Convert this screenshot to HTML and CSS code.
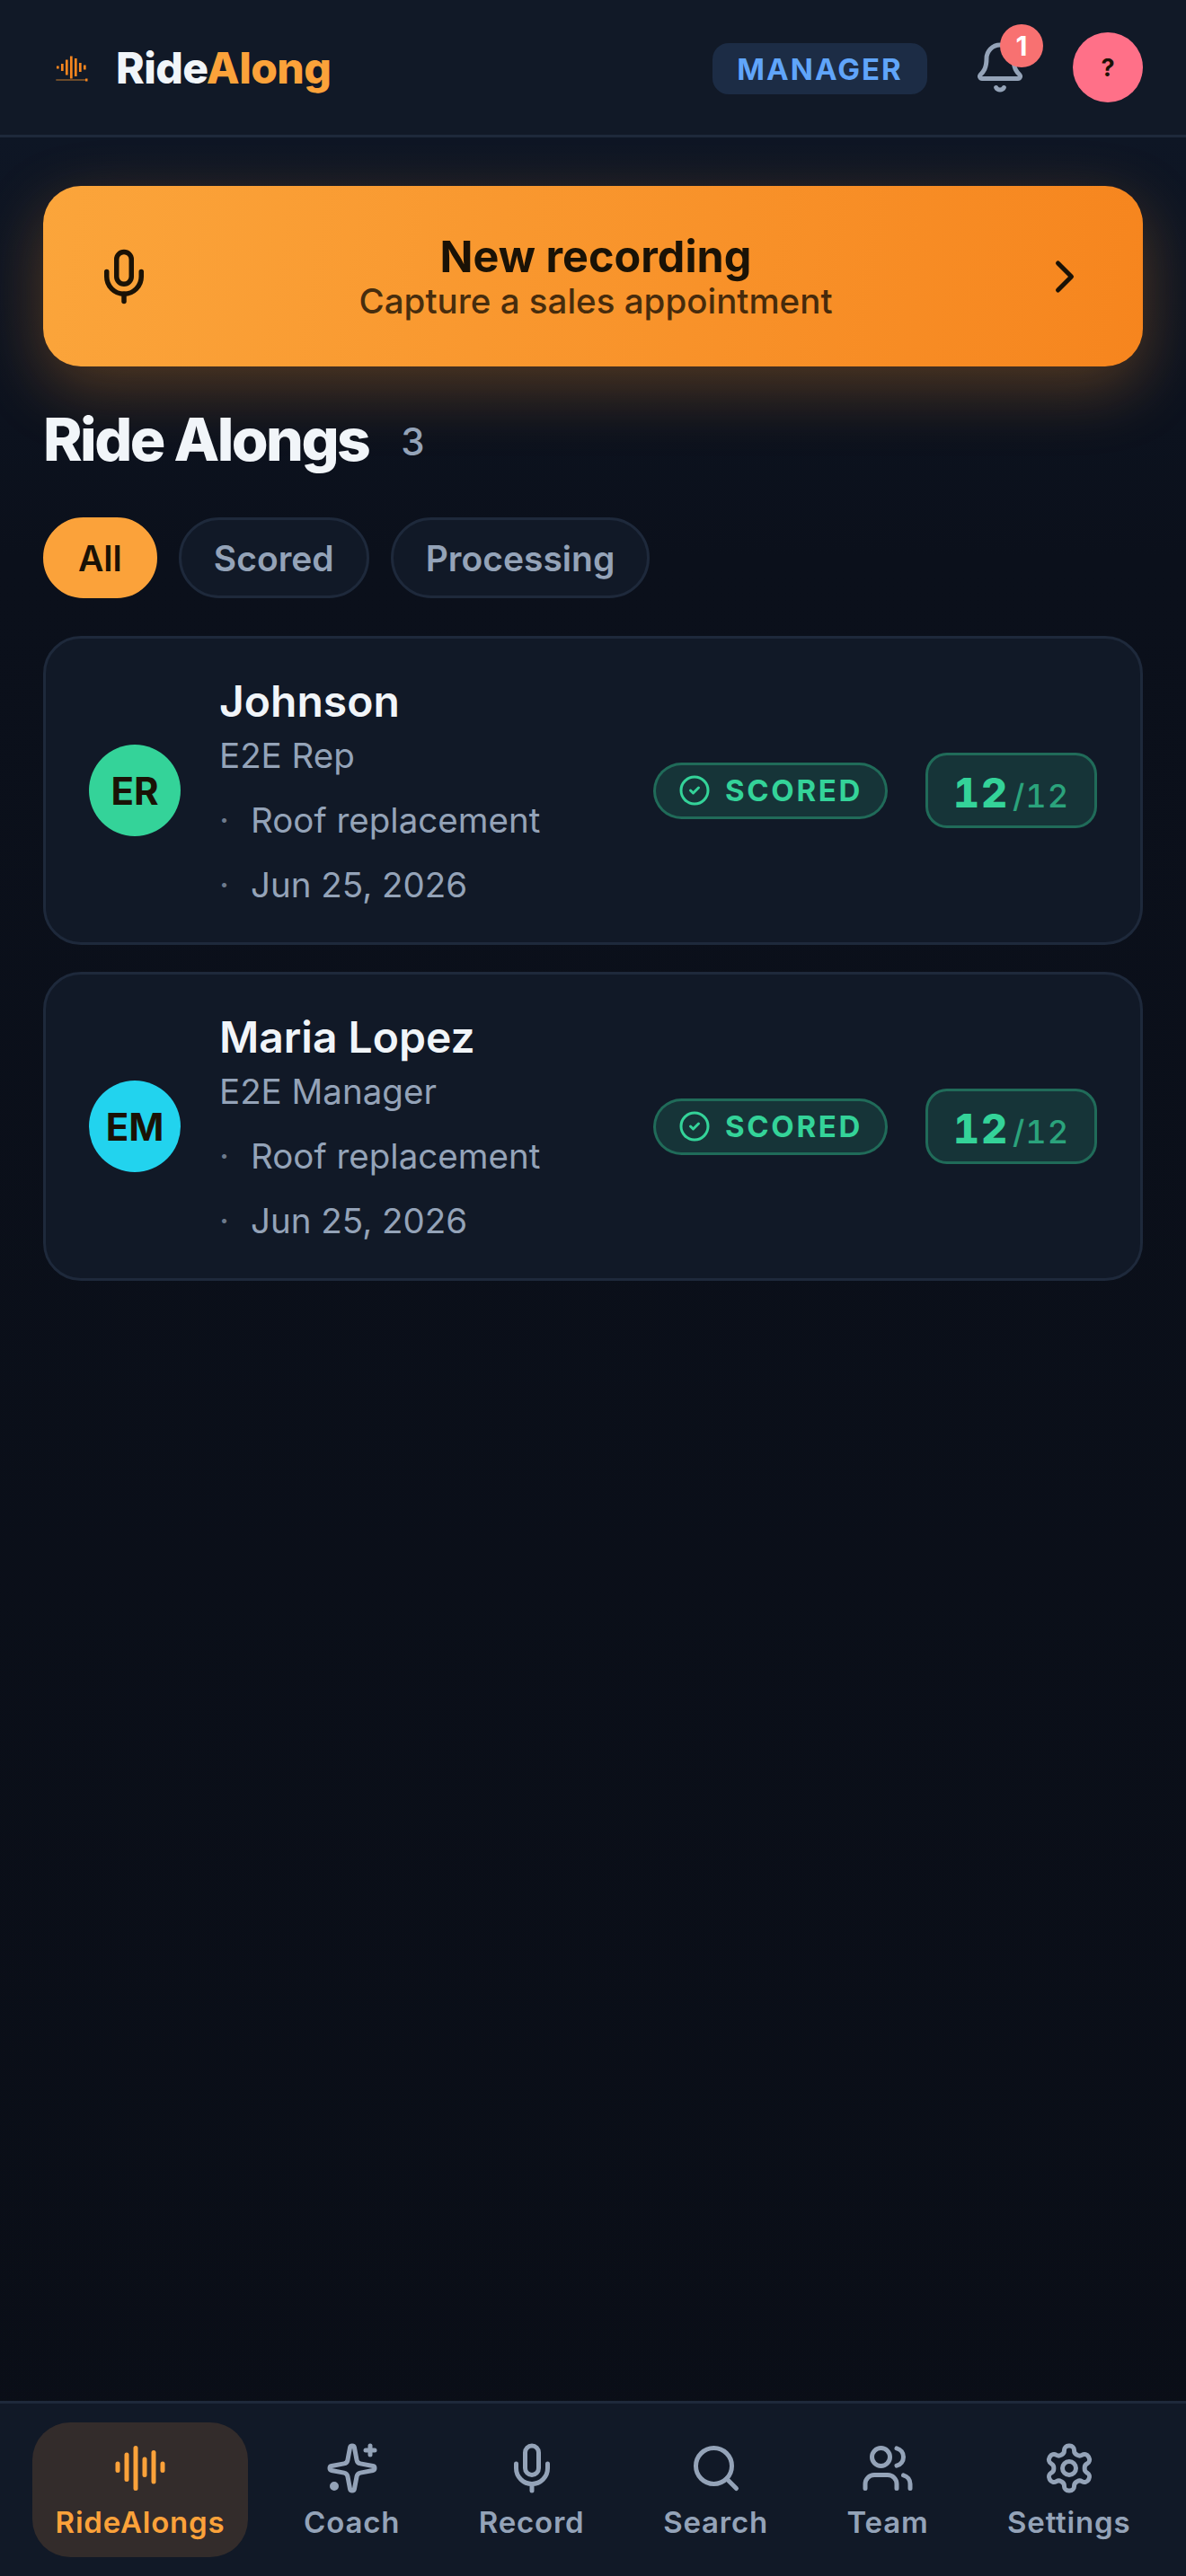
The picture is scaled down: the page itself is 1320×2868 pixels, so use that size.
FILE: index.html
```html
<!DOCTYPE html>
<html lang="en">
<head>
    <meta charset="UTF-8">
    <meta name="viewport" content="width=device-width, initial-scale=1.0">
    <title>RideAlong</title>
    <link rel="stylesheet" href="styles.css">
</head>
<body>
    <header class="topbar">
        <div class="brand">
            <svg class="brand-mark" viewBox="0 0 60 60">
                <path class="brand-wave" d="M16.3 28.4v3.2M21.3 26v8M26.3 21.5v17M31.3 17.5v25M36.3 20v20M41.3 25v10M46.3 27.5v5"/>
                <path class="brand-line" d="M14.3 44H47"/>
                <path class="brand-tip" d="M47 44h2.5"/>
            </svg>
            <span class="brand-name">Ride<span class="brand-accent">Along</span></span>
        </div>
        <div class="topbar-right">
            <span class="role-pill">MANAGER</span>
            <div class="bell">
                <svg class="icon-bell" viewBox="0 0 24 24"><path d="M10.268 21a2 2 0 0 0 3.464 0"/><path d="M3.262 15.326A1 1 0 0 0 4 17h16a1 1 0 0 0 .74-1.673C19.41 13.956 18 12.499 18 8A6 6 0 0 0 6 8c0 4.499-1.411 5.956-2.738 7.326"/></svg>
                <span class="bell-count">1</span>
            </div>
            <div class="user-avatar">?</div>
        </div>
    </header>

    <main class="content">
        <a class="record-banner">
            <svg class="icon-mic" viewBox="0 0 24 24"><path d="M12 19v3"/><path d="M19 10v2a7 7 0 0 1-14 0v-2"/><rect x="9" y="2" width="6" height="13" rx="3"/></svg>
            <div class="record-text">
                <div class="record-title">New recording</div>
                <div class="record-sub">Capture a sales appointment</div>
            </div>
            <svg class="icon-chevron" viewBox="0 0 24 24"><path d="m9 18 6-6-6-6"/></svg>
        </a>

        <div class="section-head">
            <h1>Ride Alongs</h1>
            <span class="section-count">3</span>
        </div>

        <div class="filters">
            <button class="filter active">All</button>
            <button class="filter">Scored</button>
            <button class="filter">Processing</button>
        </div>

        <div class="card">
            <div class="avatar avatar-green">ER</div>
            <div class="card-info">
                <div class="card-name">Johnson</div>
                <div class="card-role">E2E Rep</div>
                <div class="card-meta"><span class="dot">·</span>Roof replacement</div>
                <div class="card-meta"><span class="dot">·</span>Jun 25, 2026</div>
            </div>
            <div class="status-pill">
                <svg class="icon-check" viewBox="0 0 24 24"><circle cx="12" cy="12" r="10"/><path d="m9 12 2 2 4-4"/></svg>
                SCORED
            </div>
            <div class="score"><span class="score-num">12</span><span class="score-max">/12</span></div>
        </div>

        <div class="card">
            <div class="avatar avatar-cyan">EM</div>
            <div class="card-info">
                <div class="card-name">Maria Lopez</div>
                <div class="card-role">E2E Manager</div>
                <div class="card-meta"><span class="dot">·</span>Roof replacement</div>
                <div class="card-meta"><span class="dot">·</span>Jun 25, 2026</div>
            </div>
            <div class="status-pill">
                <svg class="icon-check" viewBox="0 0 24 24"><circle cx="12" cy="12" r="10"/><path d="m9 12 2 2 4-4"/></svg>
                SCORED
            </div>
            <div class="score"><span class="score-num">12</span><span class="score-max">/12</span></div>
        </div>
    </main>

    <nav class="bottom-nav">
        <a class="nav-item active">
            <svg viewBox="0 0 24 24"><path d="M2 10v3"/><path d="M6 6v11"/><path d="M10 3v18"/><path d="M14 8v7"/><path d="M18 5v13"/><path d="M22 10v3"/></svg>
            <span>RideAlongs</span>
        </a>
        <a class="nav-item">
            <svg viewBox="0 0 24 24"><path d="M11.017 2.814a1 1 0 0 1 1.966 0l1.051 5.558a2 2 0 0 0 1.594 1.594l5.558 1.051a1 1 0 0 1 0 1.966l-5.558 1.051a2 2 0 0 0-1.594 1.594l-1.051 5.558a1 1 0 0 1-1.966 0l-1.051-5.558a2 2 0 0 0-1.594-1.594l-5.558-1.051a1 1 0 0 1 0-1.966l5.558-1.051a2 2 0 0 0 1.594-1.594z"/><path d="M20 2v4"/><path d="M22 4h-4"/><circle cx="4" cy="20" r="1"/></svg>
            <span>Coach</span>
        </a>
        <a class="nav-item">
            <svg viewBox="0 0 24 24"><path d="M12 19v3"/><path d="M19 10v2a7 7 0 0 1-14 0v-2"/><rect x="9" y="2" width="6" height="13" rx="3"/></svg>
            <span>Record</span>
        </a>
        <a class="nav-item">
            <svg viewBox="0 0 24 24"><circle cx="11" cy="11" r="8"/><path d="m21 21-4.3-4.3"/></svg>
            <span>Search</span>
        </a>
        <a class="nav-item">
            <svg viewBox="0 0 24 24"><path d="M16 21v-2a4 4 0 0 0-4-4H6a4 4 0 0 0-4 4v2"/><circle cx="9" cy="7" r="4"/><path d="M16 3.128a4 4 0 0 1 0 7.744"/><path d="M22 21v-2a4 4 0 0 0-3-3.87"/></svg>
            <span>Team</span>
        </a>
        <a class="nav-item">
            <svg viewBox="0 0 24 24"><path d="M12.22 2h-.44a2 2 0 0 0-2 2v.18a2 2 0 0 1-1 1.73l-.43.25a2 2 0 0 1-2 0l-.15-.08a2 2 0 0 0-2.73.73l-.22.38a2 2 0 0 0 .73 2.73l.15.1a2 2 0 0 1 1 1.72v.51a2 2 0 0 1-1 1.74l-.15.09a2 2 0 0 0-.73 2.73l.22.38a2 2 0 0 0 2.73.73l.15-.08a2 2 0 0 1 2 0l.43.25a2 2 0 0 1 1 1.73V20a2 2 0 0 0 2 2h.44a2 2 0 0 0 2-2v-.18a2 2 0 0 1 1-1.73l.43-.25a2 2 0 0 1 2 0l.15.08a2 2 0 0 0 2.73-.73l.22-.39a2 2 0 0 0-.73-2.73l-.15-.08a2 2 0 0 1-1-1.74v-.5a2 2 0 0 1 1-1.74l.15-.09a2 2 0 0 0 .73-2.73l-.22-.38a2 2 0 0 0-2.73-.73l-.15.08a2 2 0 0 1-2 0l-.43-.25a2 2 0 0 1-1-1.73V4a2 2 0 0 0-2-2z"/><circle cx="12" cy="12" r="3"/></svg>
            <span>Settings</span>
        </a>
    </nav>
</body>
</html>
```

FILE: styles.css
```css
:root {
    --panel: #111927;
    --line: #1e293b;
    --text: #f1f5f9;
    --muted: #94a3b8;
    --orange: #fba23a;
    --orange-deep: #f6851e;
    --green: #34d399;
    --ink: #1a1206;
}

* {
    box-sizing: border-box;
}

html, body {
    margin: 0;
    padding: 0;
}

body {
    width: 1320px;
    min-height: 2868px;
    display: flex;
    flex-direction: column;
    font-family: 'Inter', 'Liberation Sans', sans-serif;
    color: var(--text);
    background: linear-gradient(180deg, #0f1828 0, #0b101b 620px, #0a0e17 100%);
}

svg {
    fill: none;
    stroke: currentColor;
    stroke-width: 2;
    stroke-linecap: round;
    stroke-linejoin: round;
}

.topbar {
    height: 153px;
    padding: 0 48px;
    display: flex;
    align-items: center;
    justify-content: space-between;
    background: var(--panel);
    border-bottom: 3px solid var(--line);
}

.brand {
    display: flex;
    align-items: center;
    gap: 21px;
}

.brand-mark {
    width: 60px;
    height: 60px;
    stroke-linecap: butt;
}

.brand-wave {
    stroke: var(--orange-deep);
    stroke-width: 2.7;
}

.brand-line {
    stroke: #6b4a2a;
    stroke-width: 2;
}

.brand-tip {
    stroke: var(--orange-deep);
    stroke-width: 3;
}

.brand-name {
    font-size: 48px;
    font-weight: 800;
    letter-spacing: -0.6px;
}

.brand-accent {
    color: var(--orange);
}

.topbar-right {
    display: flex;
    align-items: center;
}

.role-pill {
    height: 57px;
    width: 239px;
    margin-top: 3px;
    padding-top: 1px;
    display: flex;
    align-items: center;
    justify-content: center;
    border-radius: 18px;
    background: #1c2c45;
    color: #60a5fa;
    font-size: 33px;
    font-weight: 700;
    letter-spacing: 2px;
}

.bell {
    position: relative;
    width: 60px;
    height: 60px;
    margin-left: 51px;
    color: var(--muted);
}

.icon-bell {
    width: 60px;
    height: 60px;
}

.bell-count {
    position: absolute;
    top: -18px;
    left: 30px;
    width: 48px;
    height: 48px;
    border-radius: 50%;
    display: flex;
    align-items: center;
    justify-content: center;
    background: #f87171;
    color: #fff;
    font-size: 30px;
    font-weight: 700;
}

.user-avatar {
    width: 78px;
    height: 78px;
    margin-left: 51px;
    border-radius: 50%;
    display: flex;
    align-items: center;
    justify-content: center;
    background: #ff7088;
    color: var(--ink);
    font-size: 27px;
    font-weight: 700;
}

.content {
    flex: 1;
    padding: 54px 48px 0;
}

.record-banner {
    height: 201px;
    padding: 0 57px;
    display: flex;
    align-items: center;
    border-radius: 42px;
    background: linear-gradient(100deg, #fba53b 0%, #f6851e 100%);
    box-shadow: 0 24px 72px rgba(249, 145, 40, 0.3);
    color: var(--ink);
}

.icon-mic {
    width: 66px;
    height: 66px;
}

.icon-chevron {
    width: 60px;
    height: 60px;
}

.record-text {
    flex: 1;
    text-align: center;
}

.record-title {
    font-size: 48.5px;
    font-weight: 700;
    line-height: 54px;
}

.record-sub {
    font-size: 38.5px;
    font-weight: 500;
    line-height: 44px;
    opacity: 0.8;
}

.section-head {
    display: flex;
    align-items: center;
    gap: 36px;
    margin-top: 42px;
    height: 78px;
}

h1 {
    margin: 0;
    font-size: 66px;
    font-weight: 800;
    letter-spacing: -2.6px;
}

.section-count {
    margin-top: 4px;
    font-size: 42px;
    font-weight: 500;
    color: var(--muted);
}

.filters {
    display: flex;
    gap: 24px;
    margin-top: 48px;
}

.filter {
    height: 90px;
    padding: 0 36px;
    border-radius: 45px;
    border: 3px solid var(--line);
    background: var(--panel);
    color: var(--muted);
    font-family: inherit;
    font-size: 39px;
    font-weight: 600;
}

.filter.active {
    background: var(--orange);
    border-color: var(--orange);
    color: var(--ink);
}

.card {
    height: 344px;
    margin-top: 42px;
    padding: 0 48px;
    display: flex;
    align-items: center;
    background: var(--panel);
    border: 3px solid var(--line);
    border-radius: 42px;
}

.card + .card {
    margin-top: 30px;
}

.avatar {
    width: 102px;
    height: 102px;
    border-radius: 50%;
    display: flex;
    align-items: center;
    justify-content: center;
    color: var(--ink);
    font-size: 42px;
    font-weight: 700;
}

.avatar-green {
    background: var(--green);
}

.avatar-cyan {
    background: #22d3ee;
}

.card-info {
    flex: 1;
    margin: 12px 0 0 43px;
}

.card-name {
    font-size: 48px;
    font-weight: 600;
    line-height: 60px;
}

.card-role {
    font-size: 38.5px;
    line-height: 60px;
    margin-bottom: 6px;
    color: var(--muted);
}

.card-meta {
    display: flex;
    font-size: 38.5px;
    line-height: 72px;
    color: var(--muted);
}

.dot {
    width: 35px;
    opacity: 0.7;
}

.status-pill {
    height: 63px;
    width: 261px;
    display: flex;
    align-items: center;
    justify-content: center;
    gap: 16px;
    border-radius: 32px;
    border: 3px solid rgba(52, 211, 153, 0.35);
    background: rgba(52, 211, 153, 0.15);
    color: var(--green);
    font-size: 33px;
    font-weight: 700;
    letter-spacing: 2.7px;
}

.icon-check {
    width: 36px;
    height: 36px;
}

.score {
    width: 191px;
    height: 84px;
    margin-left: 42px;
    display: flex;
    align-items: baseline;
    justify-content: center;
    padding-top: 14px;
    border-radius: 24px;
    border: 3px solid rgba(52, 211, 153, 0.35);
    background: rgba(52, 211, 153, 0.15);
    color: var(--green);
    font-variant-numeric: tabular-nums;
}

.score-num {
    font-size: 45px;
    font-weight: 800;
    letter-spacing: 2px;
}

.score-max {
    font-size: 36px;
    font-weight: 500;
    letter-spacing: 1px;
    margin-left: 4px;
    opacity: 0.7;
}

.bottom-nav {
    height: 195px;
    padding-top: 21px;
    display: flex;
    justify-content: space-evenly;
    align-items: flex-start;
    background: var(--panel);
    border-top: 3px solid var(--line);
}

.nav-item {
    height: 150px;
    padding: 21px 26px 0;
    display: flex;
    flex-direction: column;
    align-items: center;
    border-radius: 42px;
    color: var(--muted);
    font-size: 33px;
    font-weight: 600;
    letter-spacing: 0.8px;
}

.nav-item svg {
    width: 60px;
    height: 60px;
}

.nav-item span {
    margin-top: 9px;
    line-height: 42px;
}

.nav-item.active {
    background: #332c2b;
    color: var(--orange);
}
```
